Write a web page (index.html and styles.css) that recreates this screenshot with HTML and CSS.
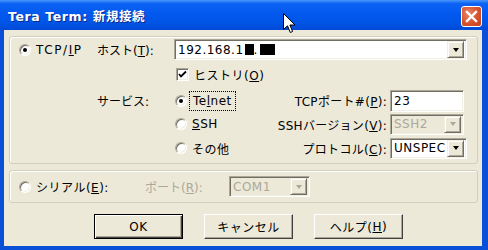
FILE: index.html
```html
<!DOCTYPE html>
<html lang="ja">
<head>
    <meta charset="UTF-8">
    <title>Tera Term: 新規接続</title>
    <link rel="stylesheet" href="styles.css">
</head>
<body>
    <div class="window">
        <!-- Barra de título -->
        <div class="titlebar">
            <span class="title">Tera Term: 新規接続</span>
            <div class="close-btn">
                <svg width="13" height="13" viewBox="0 0 13 13"><path d="M2 2 L11 11 M11 2 L2 11" stroke="#fff" stroke-width="2.4" stroke-linecap="square"/></svg>
            </div>
        </div>

        <div class="client">
            <!-- TCP/IP -->
            <div class="group tcp-group">
                <div class="cell-a"><span class="radio checked"></span><span class="lbl wide-lbl">TCP/<u>I</u>P</span></div>
                <div class="cell-b">ホスト(<u>T</u>):</div>
                <div class="combo host-combo">
                    <span class="combo-text">192.168.1<span class="mask"></span>.<span class="mask wide"></span></span>
                    <span class="drop"><i class="tri"></i></span>
                </div>

                <div class="cell-c row2"><span class="check"><svg width="9" height="9" viewBox="0 0 9 9"><path d="M1 4 L3 6.5 L8 1.5" stroke="#000" stroke-width="1.8" fill="none"/></svg></span><span class="lbl">ヒストリ(<u>O</u>)</span></div>

                <div class="cell-b row3">サービス:</div>
                <div class="cell-c row3"><span class="radio checked"></span><span class="lbl focus">Te<u>l</u>net</span></div>
                <div class="cell-d row3">TCPポート#(<u>P</u>):</div>
                <div class="edit row3">23</div>

                <div class="cell-c row4"><span class="radio"></span><span class="lbl"><u>S</u>SH</span></div>
                <div class="cell-d row4">SSHバージョン(<u>V</u>):</div>
                <div class="combo disabled row4 small"><span class="combo-text">SSH2</span><span class="drop"><i class="tri"></i></span></div>

                <div class="cell-c row5"><span class="radio"></span><span class="lbl">その他</span></div>
                <div class="cell-d row5">プロトコル(<u>C</u>):</div>
                <div class="combo row5 proto"><span class="combo-text">UNSPEC</span><span class="drop"><i class="tri"></i></span></div>
            </div>

            <!-- Serial -->
            <div class="group serial-group">
                <div class="serial-a"><span class="radio"></span><span class="lbl">シリアル(<u>E</u>):</span></div>
                <div class="serial-b">ポート(<u>R</u>):</div>
                <div class="combo disabled com"><span class="combo-text">COM1</span><span class="drop"><i class="tri"></i></span></div>
            </div>

            <!-- Botones -->
            <div class="buttons">
                <div class="btn default">OK</div>
                <div class="btn">キャンセル</div>
                <div class="btn">ヘルプ(<u>H</u>)</div>
            </div>
        </div>

        <!-- Cursor del ratón -->
        <svg class="cursor" width="13" height="21" viewBox="0 0 13 21">
            <path d="M0.5 0.5 L0.5 16.5 L4.5 12.8 L7.3 19.5 L9.6 18.5 L6.9 12 L12 12 Z" fill="#fff" stroke="#000" stroke-width="1"/>
        </svg>
    </div>
</body>
</html>
```

FILE: styles.css
```css
/* Ventana estilo Windows XP */
body {
    margin: 0;
    background: #fff;
}

.window {
    position: relative;
    width: 488px;
    height: 250px;
    display: flex;
    flex-direction: column;
    background: #0a4fd8;
    font-family: "DejaVu Sans", "Noto Sans CJK JP", sans-serif;
    font-size: 12px;
    color: #000;
    overflow: hidden;
}

.titlebar {
    height: 30px;
    flex: none;
    display: flex;
    align-items: center;
    justify-content: space-between;
    padding: 0 6px 0 8px;
    background: linear-gradient(to bottom, #4a95fa 0%, #0c62f4 12%, #0259ee 45%, #0055e6 75%, #0049d6 100%);
}

.title {
    color: #fff;
    font-weight: bold;
    font-size: 12.5px;
    letter-spacing: 0.6px;
    text-shadow: 1px 1px 0 #0a2a8a;
    padding-top: 1px;
}

.close-btn {
    width: 21px;
    height: 21px;
    box-sizing: border-box;
    border: 1px solid #fff;
    border-radius: 3px;
    background: radial-gradient(circle at 35% 35%, #e8896a 0%, #d9542f 50%, #c2401d 100%);
    display: flex;
    align-items: center;
    justify-content: center;
    margin-top: 2px;
}

.client {
    flex: 1;
    margin: 0 6px 4px 4px;
    background: #ece9d8;
    padding: 6px 4px 0 5px;
}

.group {
    border: 1px solid #d0d0bf;
    border-radius: 3px;
    box-shadow: inset 1px 1px 0 #fff;
}

.tcp-group {
    height: 128px;
    box-sizing: border-box;
    padding: 2px 0 3px 9px;
    display: grid;
    grid-template-columns: 78px 77px 86px 130px 77px;
    grid-template-rows: 21px 29px 23px 24px 24px;
    align-items: center;
}

.cell-a, .cell-c, .serial-a {
    display: flex;
    align-items: center;
    white-space: nowrap;
}

.cell-a { grid-column: 1; grid-row: 1; }
.cell-b { grid-column: 2; grid-row: 1; white-space: nowrap; }
.cell-c { grid-column: 3; padding-left: 1px; }
.cell-d {
    grid-column: 4;
    text-align: right;
    padding-right: 3px;
    white-space: nowrap;
    letter-spacing: 0.3px;
}

.row2 { grid-row: 2; }
.row3 { grid-row: 3; }
.row4 { grid-row: 4; }
.row5 { grid-row: 5; }

.lbl {
    margin-left: 5px;
    letter-spacing: 0.5px;
}

.wide-lbl { letter-spacing: 1.6px; }

.focus {
    outline: 1px dotted #000;
    outline-offset: 2px;
    padding: 0 1px;
}

u { text-decoration: underline; }

/* Botones de radio y casilla clásicos */
.radio {
    width: 12px;
    height: 12px;
    box-sizing: border-box;
    border-radius: 50%;
    border: 1px solid;
    border-color: #aca899 #fff #fff #aca899;
    box-shadow: inset 1px 1px 0 #716f64, inset -1px -1px 0 #f1efe2;
    background: #fff;
    position: relative;
    flex: none;
}

.radio.checked::after {
    content: "";
    position: absolute;
    left: 3px;
    top: 3px;
    width: 4px;
    height: 4px;
    border-radius: 50%;
    background: #000;
}

.check {
    width: 13px;
    height: 13px;
    box-sizing: border-box;
    border: 1px solid;
    border-color: #aca899 #fff #fff #aca899;
    box-shadow: inset 1px 1px 0 #716f64, inset -1px -1px 0 #f1efe2;
    background: #fff;
    display: flex;
    align-items: center;
    justify-content: center;
    flex: none;
    margin-left: 1px;
}

/* Campos de texto y listas */
.edit, .combo {
    box-sizing: border-box;
    border: 1px solid;
    border-color: #aca899 #fff #fff #aca899;
    box-shadow: inset 1px 1px 0 #716f64, inset -1px -1px 0 #f1efe2;
    background: #fff;
    display: flex;
    align-items: center;
    padding-left: 3px;
    letter-spacing: 0.5px;
}

.edit {
    grid-column: 5;
    width: 74px;
    height: 22px;
}

.combo { justify-content: space-between; padding-right: 2px; }

.host-combo {
    grid-column: 3 / 6;
    grid-row: 1;
    height: 21px;
}

.small { grid-column: 5; width: 74px; height: 21px; }
.proto { grid-column: 5; width: 77px; height: 21px; }

.combo-text {
    display: flex;
    align-items: center;
    white-space: nowrap;
}

.mask {
    display: inline-block;
    width: 9px;
    height: 11px;
    background: #000;
    margin-left: 1px;
}

.mask.wide { width: 15px; margin-left: 2px; }

.drop {
    width: 17px;
    height: 17px;
    box-sizing: border-box;
    border: 1px solid;
    border-color: #f1efe2 #716f64 #716f64 #f1efe2;
    box-shadow: inset 1px 1px 0 #fff, inset -1px -1px 0 #aca899;
    background: #ece9d8;
    display: flex;
    align-items: center;
    justify-content: center;
    flex: none;
}

.tri {
    width: 0;
    height: 0;
    border-left: 3.5px solid transparent;
    border-right: 3.5px solid transparent;
    border-top: 4px solid #000;
}

.disabled { background: #ece9d8; color: #aca899; }
.disabled .tri { border-top-color: #aca899; }

/* Grupo serie */
.serial-group {
    margin-top: 6px;
    height: 33px;
    box-sizing: border-box;
    display: flex;
    align-items: center;
    padding-left: 9px;
}

.serial-a { width: 126px; }
.serial-b { width: 84px; color: #aca899; white-space: nowrap; }

.com { width: 81px; height: 21px; }

.buttons {
    display: flex;
    gap: 21px;
    padding: 11px 0 0 85px;
}

.btn {
    width: 89px;
    height: 25px;
    box-sizing: border-box;
    border: 1px solid;
    border-color: #fff #404040 #404040 #fff;
    box-shadow: inset -1px -1px 0 #aca899;
    display: flex;
    align-items: center;
    justify-content: center;
    letter-spacing: 0.5px;
}

.btn.default {
    border-color: #000;
    box-shadow: inset 1px 1px 0 #fff, inset -1px -1px 0 #404040, inset -2px -2px 0 #aca899;
}

.cursor {
    position: absolute;
    left: 283px;
    top: 13px;
}
```
